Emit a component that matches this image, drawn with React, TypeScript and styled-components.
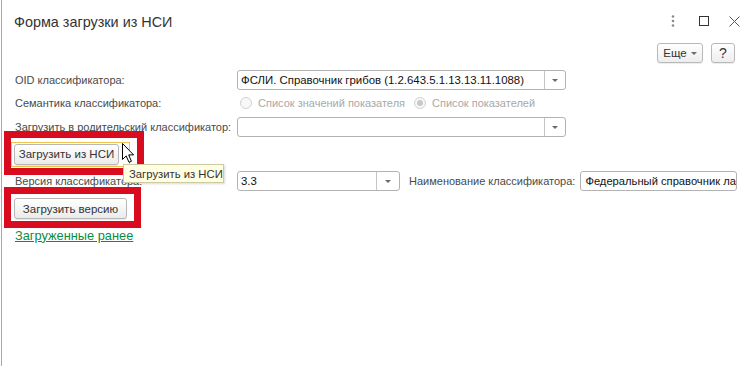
import styled, { createGlobalStyle, css } from "styled-components";

const GlobalStyle = createGlobalStyle`
  html, body {
    margin: 0;
    padding: 0;
    background: #fff;
  }
  body {
    font-family: "Liberation Sans", Arial, sans-serif;
  }
`;

const Page = styled.div`
  position: relative;
  width: 754px;
  height: 366px;
  margin-left: 1px;
  border-left: 1px solid #a9a9a9;
  box-sizing: border-box;
  overflow: hidden;
  background: #fff;
  font-size: 11px;
  color: #4a4a4a;
`;

const Header = styled.div`
  display: flex;
  align-items: center;
  height: 43px;
  padding-left: 12px;
`;

const Title = styled.h1`
  margin: 0;
  font-size: 14.4px;
  font-weight: normal;
  color: #333;
`;

const WindowControls = styled.div`
  display: flex;
  margin-left: auto;
  padding-right: 5px;
  margin-top: -1px;
`;

const ControlBox = styled.div`
  width: 31px;
  height: 20px;
  display: flex;
  align-items: center;
  justify-content: center;
`;

const Toolbar = styled.div`
  display: flex;
  justify-content: flex-end;
  gap: 8px;
  height: 20px;
  padding-right: 20px;
`;

const ToolButton = styled.button<{ $w: number }>`
  display: flex;
  align-items: center;
  justify-content: center;
  gap: 4px;
  width: ${(p) => p.$w}px;
  height: 20px;
  padding: 0;
  border: 1px solid #b9b9b9;
  border-radius: 3px;
  background: linear-gradient(#ffffff, #ededed);
  box-shadow: 0 1px 1px rgba(0, 0, 0, 0.08);
  font-family: inherit;
  font-size: 11.5px;
  color: #333;
`;

const HelpMark = styled.span`
  font-size: 14px;
  color: #333;
`;

const Caret = styled.span`
  width: 0;
  height: 0;
  border-left: 3px solid transparent;
  border-right: 3px solid transparent;
  border-top: 3px solid #6a6a6a;
`;

const Form = styled.div`
  padding-left: 12px;
`;

const Row = styled.div<{ $mt: number; $h: number }>`
  display: flex;
  align-items: center;
  margin-top: ${(p) => p.$mt}px;
  height: ${(p) => p.$h}px;
`;

const Label = styled.span`
  width: 222px;
  padding-left: 1px;
  white-space: nowrap;
  color: #4a4a4a;
`;

const Combo = styled.div<{ $w: number; $drop: number }>`
  display: flex;
  width: ${(p) => p.$w}px;
  height: 20px;
  box-sizing: border-box;
  border: 1px solid #b3b3b3;
  border-radius: 3px;
  background: #fff;

  & > span:last-child {
    width: ${(p) => p.$drop}px;
  }
`;

const ComboText = styled.span`
  flex: 1;
  display: flex;
  align-items: center;
  padding-left: 3px;
  font-size: 11.4px;
  color: #111;
  white-space: nowrap;
  overflow: hidden;
`;

const DropPart = styled.span`
  display: flex;
  align-items: center;
  justify-content: center;
  border-left: 1px solid #c6c6c6;
`;

const TextInput = styled.div`
  width: 157px;
  height: 20px;
  box-sizing: border-box;
  border: 1px solid #b3b3b3;
  border-radius: 3px;
  padding-left: 4px;
  display: flex;
  align-items: center;
  white-space: nowrap;
  overflow: hidden;
  font-size: 11.2px;
  color: #111;
`;

const InlineLabel = styled.span`
  margin: 0 5px 0 9px;
  color: #4a4a4a;
  white-space: nowrap;
`;

const RadioGroup = styled.div`
  display: flex;
  align-items: center;
  gap: 9px;
  margin-left: 3px;
`;

const RadioOption = styled.label`
  display: flex;
  align-items: center;
  gap: 6px;
  color: #a8a8a8;
  white-space: nowrap;
`;

const RadioCircle = styled.span<{ $checked?: boolean }>`
  position: relative;
  width: 12px;
  height: 12px;
  box-sizing: border-box;
  border-radius: 50%;
  border: 1px solid #d2d2d2;
  background: #f8f8f8;

  ${(p) =>
    p.$checked &&
    css`
      &::after {
        content: "";
        position: absolute;
        left: 2px;
        top: 2px;
        width: 6px;
        height: 6px;
        border-radius: 50%;
        background: #c9c9c9;
      }
    `}
`;

const FocusFrame = styled.div`
  display: flex;
  margin-left: -3px;
  padding: 1px 10px 1px 2px;
  border: 1px solid #f2c24c;
`;

const Button = styled.button<{ $w: number }>`
  width: ${(p) => p.$w}px;
  height: 21px;
  padding: 0;
  border: 1px solid #b7b7b7;
  border-radius: 3px;
  background: linear-gradient(#ffffff, #ebebeb);
  box-shadow: 0 1px 1px rgba(0, 0, 0, 0.1);
  font-family: inherit;
  font-size: 11.5px;
  color: #333;
`;

const Link = styled.a`
  padding-left: 1px;
  color: #0a8c43;
  text-decoration: underline;
  font-size: 12.8px;
`;

const Tooltip = styled.div`
  position: absolute;
  left: 121px;
  top: 164px;
  width: 101px;
  height: 19px;
  box-sizing: border-box;
  padding-left: 5px;
  display: flex;
  align-items: center;
  background: #ffffe3;
  border: 1px solid #cfc9a2;
  box-shadow: 1px 1px 2px rgba(0, 0, 0, 0.15);
  font-size: 11.3px;
  color: #333;
  white-space: nowrap;
`;

const Highlight = styled.div<{ $x: number; $y: number; $w: number; $h: number }>`
  position: absolute;
  left: ${(p) => p.$x}px;
  top: ${(p) => p.$y}px;
  width: ${(p) => p.$w}px;
  height: ${(p) => p.$h}px;
  box-sizing: border-box;
  border: 7px solid #d90b1f;
`;

const Cursor = styled.svg`
  position: absolute;
  left: 119px;
  top: 142px;
`;

const App = () => (
  <>
    <GlobalStyle />
    <Page>
      <Header>
        <Title>Форма загрузки из НСИ</Title>
        <WindowControls>
          <ControlBox>
            <svg width="4" height="12" viewBox="0 0 4 12">
              <circle cx="2" cy="1.5" r="1.3" fill="#8a8a8a" />
              <circle cx="2" cy="6" r="1.3" fill="#8a8a8a" />
              <circle cx="2" cy="10.5" r="1.3" fill="#8a8a8a" />
            </svg>
          </ControlBox>
          <ControlBox>
            <svg width="10" height="10" viewBox="0 0 10 10">
              <rect x="0.5" y="0.5" width="9" height="9" fill="none" stroke="#333" />
            </svg>
          </ControlBox>
          <ControlBox>
            <svg width="11" height="11" viewBox="0 0 11 11">
              <path d="M0.5 0.5 L10.5 10.5 M10.5 0.5 L0.5 10.5" stroke="#555" strokeWidth="1" />
            </svg>
          </ControlBox>
        </WindowControls>
      </Header>

      <Toolbar>
        <ToolButton $w={46}>
          Еще <Caret />
        </ToolButton>
        <ToolButton $w={24}>
          <HelpMark>?</HelpMark>
        </ToolButton>
      </Toolbar>

      <Form>
        <Row $mt={7} $h={20}>
          <Label>OID классификатора:</Label>
          <Combo $w={329} $drop={20}>
            <ComboText>ФСЛИ. Справочник грибов (1.2.643.5.1.13.13.11.1088)</ComboText>
            <DropPart>
              <Caret />
            </DropPart>
          </Combo>
        </Row>

        <Row $mt={3} $h={20}>
          <Label>Семантика классификатора:</Label>
          <RadioGroup>
            <RadioOption>
              <RadioCircle />
              Список значений показателя
            </RadioOption>
            <RadioOption>
              <RadioCircle $checked />
              Список показателей
            </RadioOption>
          </RadioGroup>
        </Row>

        <Row $mt={4} $h={20}>
          <Label>Загрузить в родительский классификатор:</Label>
          <Combo $w={329} $drop={20}>
            <ComboText />
            <DropPart>
              <Caret />
            </DropPart>
          </Combo>
        </Row>

        <Row $mt={4} $h={26}>
          <FocusFrame>
            <Button $w={105}>Загрузить из НСИ</Button>
          </FocusFrame>
        </Row>

        <Row $mt={4} $h={20}>
          <Label>Версия классификатора:</Label>
          <Combo $w={163} $drop={22}>
            <ComboText>3.3</ComboText>
            <DropPart>
              <Caret />
            </DropPart>
          </Combo>
          <InlineLabel>Наименование классификатора:</InlineLabel>
          <TextInput>Федеральный справочник ла</TextInput>
        </Row>

        <Row $mt={7} $h={21}>
          <Button $w={113}>Загрузить версию</Button>
        </Row>

        <Row $mt={7} $h={18}>
          <Link href="#">Загруженные ранее</Link>
        </Row>
      </Form>

      <Highlight $x={2} $y={131} $w={140} $h={44} />
      <Highlight $x={2} $y={187} $w={137} $h={41} />

      <Tooltip>Загрузить из НСИ</Tooltip>

      <Cursor width="14" height="22" viewBox="0 0 14 22">
        <path
          d="M1.5 1.5 L1.5 17.5 L5.2 13.9 L8 20.3 L10.4 19.3 L7.7 12.9 L12.6 12.9 Z"
          fill="#fff"
          stroke="#000"
          strokeWidth="1"
          strokeLinejoin="miter"
        />
      </Cursor>
    </Page>
  </>
);

export default App;
